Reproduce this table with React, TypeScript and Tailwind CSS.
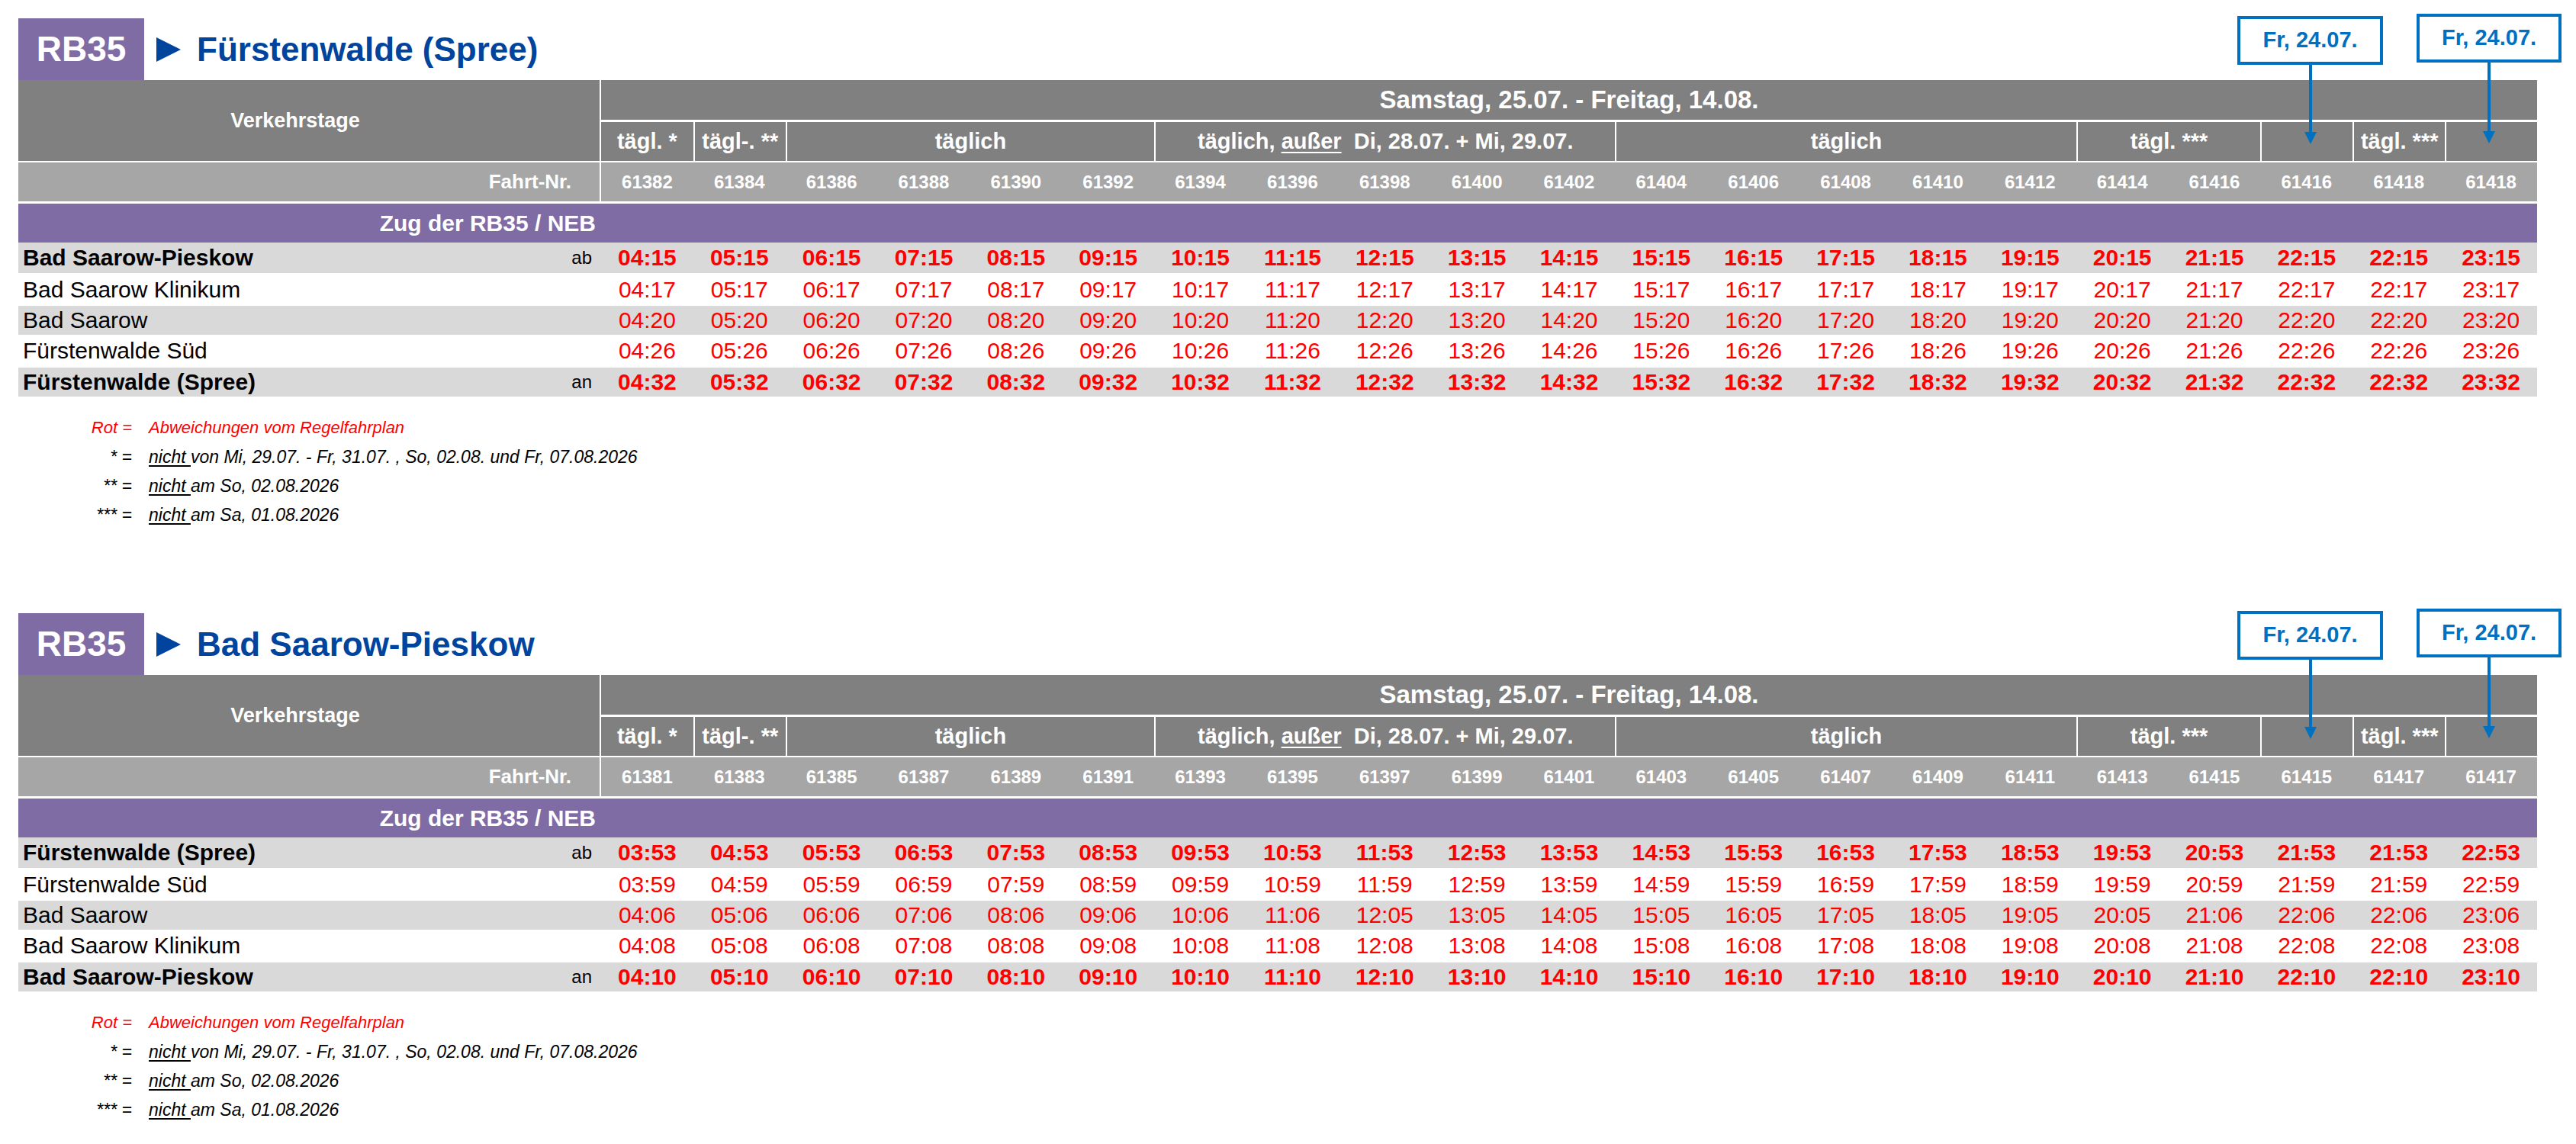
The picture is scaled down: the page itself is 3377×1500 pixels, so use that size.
import React from 'react';

// Two RB35 timetables (each direction), Excel-style: grey header bands,
// purple operator strip, zebra station rows, red times, blue callouts.

const GRID = 'grid w-[3302px] grid-cols-[764px_repeat(21,minmax(0,1fr))]';
const PURPLE = 'bg-[#806ca5]';

type Group = { span: 1 | 2 | 4 | 5; label: React.ReactNode };

const SPAN: Record<number, string> = {
  1: 'col-span-1',
  2: 'col-span-2',
  4: 'col-span-4',
  5: 'col-span-5',
};

const groups: Group[] = [
  { span: 1, label: 'tägl. *' },
  { span: 1, label: 'tägl-. **' },
  { span: 4, label: 'täglich' },
  {
    span: 5,
    label: (
      <>
        {'täglich,\u00a0'}
        <span className="underline decoration-2 underline-offset-[4px]">außer</span>
        {'\u00a0 Di, 28.07. + Mi, 29.07.'}
      </>
    ),
  },
  { span: 5, label: 'täglich' },
  { span: 2, label: 'tägl. ***' },
  { span: 1, label: '' },
  { span: 1, label: 'tägl. ***' },
  { span: 1, label: '' },
];

type Station = { name: string; bold?: boolean; tag?: string; times: string[] };

const pad = (n: number) => String(n).padStart(2, '0');

// base hours of the 21 trips
const hoursOut = [...Array.from({ length: 18 }, (_, i) => i + 4), 22, 22, 23];
const hoursBack = [...Array.from({ length: 18 }, (_, i) => i + 3), 21, 21, 22];

const tripsOut = [
  ...Array.from({ length: 17 }, (_, i) => String(61382 + i * 2)),
  '61416',
  '61416',
  '61418',
  '61418',
];
const tripsBack = [
  ...Array.from({ length: 17 }, (_, i) => String(61381 + i * 2)),
  '61415',
  '61415',
  '61417',
  '61417',
];

const at = (hours: number[], min: number, add = 0) => hours.map((h) => `${pad(h + add)}:${pad(min)}`);

const stationsOut: Station[] = [
  { name: 'Bad Saarow-Pieskow', bold: true, tag: 'ab', times: at(hoursOut, 15) },
  { name: 'Bad Saarow Klinikum', times: at(hoursOut, 17) },
  { name: 'Bad Saarow', times: at(hoursOut, 20) },
  { name: 'Fürstenwalde Süd', times: at(hoursOut, 26) },
  { name: 'Fürstenwalde (Spree)', bold: true, tag: 'an', times: at(hoursOut, 32) },
];

const stationsBack: Station[] = [
  { name: 'Fürstenwalde (Spree)', bold: true, tag: 'ab', times: at(hoursBack, 53) },
  { name: 'Fürstenwalde Süd', times: at(hoursBack, 59) },
  {
    name: 'Bad Saarow',
    times: hoursBack.map((h, i) => `${pad(h + 1)}:${i >= 8 && i <= 16 ? '05' : '06'}`),
  },
  { name: 'Bad Saarow Klinikum', times: at(hoursBack, 8, 1) },
  { name: 'Bad Saarow-Pieskow', bold: true, tag: 'an', times: at(hoursBack, 10, 1) },
];

function Arrowhead() {
  return (
    <svg width="16" height="16" viewBox="0 0 16 16" className="block">
      <polygon points="0,0 16,0 8,16" fill="#0070c0" />
    </svg>
  );
}

function Callouts() {
  return (
    <>
      <div className="absolute left-[2933px] top-[21px] flex flex-col items-center">
        <div className="flex h-[64px] w-[191px] items-center justify-center border-4 border-[#0070c0] bg-white text-[29px] font-bold text-[#0070c0]">
          Fr, 24.07.
        </div>
        <div className="h-[88px] w-[4px] bg-[#0070c0]" />
        <Arrowhead />
      </div>
      <div className="absolute left-[3168px] top-[18px] flex flex-col items-center">
        <div className="flex h-[64px] w-[190px] items-center justify-center border-4 border-[#0070c0] bg-white text-[29px] font-bold text-[#0070c0]">
          Fr, 24.07.
        </div>
        <div className="h-[90px] w-[4px] bg-[#0070c0]" />
        <Arrowhead />
      </div>
    </>
  );
}

function Notes() {
  const row = 'flex italic leading-[38px]';
  return (
    <div className="mt-[22px] flex flex-col">
      <div className={`${row} text-[22px] text-[#ff0000]`}>
        <span className="w-[149px] text-right">Rot =</span>
        <span className="ml-[22px]">Abweichungen vom Regelfahrplan</span>
      </div>
      <div className={`${row} text-[23px] text-black`}>
        <span className="w-[149px] text-right">* =</span>
        <span className="ml-[22px]">
          <span className="underline underline-offset-[3px]">nicht </span>von Mi, 29.07. - Fr, 31.07. , So,
          02.08. und Fr, 07.08.2026
        </span>
      </div>
      <div className={`${row} text-[23px] text-black`}>
        <span className="w-[149px] text-right">** =</span>
        <span className="ml-[22px]">
          <span className="underline underline-offset-[3px]">nicht </span>am So, 02.08.2026
        </span>
      </div>
      <div className={`${row} text-[23px] text-black`}>
        <span className="w-[149px] text-right">*** =</span>
        <span className="ml-[22px]">
          <span className="underline underline-offset-[3px]">nicht </span>am Sa, 01.08.2026
        </span>
      </div>
    </div>
  );
}

function Timetable({ title, trips, stations }: { title: string; trips: string[]; stations: Station[] }) {
  return (
    <section className="relative h-[780px] pl-[24px] pt-[24px]">
      <Callouts />

      {/* line badge + destination */}
      <div className="flex h-[81px] items-center">
        <div className={`flex h-full w-[165px] items-center justify-center ${PURPLE} text-[46px] font-bold text-white`}>
          RB35
        </div>
        <svg width="32" height="32" viewBox="0 0 32 32" className="ml-[16px]">
          <polygon points="0,0 32,16 0,32" fill="#00449e" />
        </svg>
        <h1 className="ml-[21px] text-[44px] font-bold leading-none text-[#00449e]">{title}</h1>
      </div>

      {/* Verkehrstage header */}
      <div className={`${GRID} grid-rows-[55px_51px] font-bold text-white`}>
        <div className="row-span-2 flex items-center justify-center border-r-2 border-white bg-[#808080] pr-[36px] text-[27px]">
          Verkehrstage
        </div>
        <div className="col-span-21 flex items-center justify-center border-b-[3px] border-white bg-[#808080] text-[33px]">
          Samstag, 25.07. - Freitag, 14.08.
        </div>
        {groups.map((g, i) => (
          <div
            key={i}
            className={`${SPAN[g.span]} flex items-center justify-center whitespace-nowrap bg-[#808080] text-[29px] ${
              i > 0 ? 'border-l-2 border-white' : ''
            }`}
          >
            {g.label}
          </div>
        ))}
      </div>

      {/* trip numbers */}
      <div className={`${GRID} mt-[2px] h-[51px] bg-[#a6a6a6] font-bold text-white`}>
        <div className="flex items-center justify-end border-r-2 border-white pr-[37px] text-[26px]">Fahrt-Nr.</div>
        {trips.map((t, i) => (
          <div key={i} className="flex items-center justify-center text-[24px]">
            {t}
          </div>
        ))}
      </div>

      {/* operator strip */}
      <div className={`mt-[3px] flex h-[51px] w-[3302px] ${PURPLE}`}>
        <div className="flex w-[764px] items-center justify-end pr-[7px] text-[30px] font-bold text-white">
          Zug der RB35 / NEB
        </div>
      </div>

      {/* station rows */}
      {stations.map((s, r) => (
        <div
          key={r}
          className={`${GRID} h-[40.4px] ${r % 2 === 0 ? 'bg-[#d9d9d9]' : 'bg-white'} ${
            r > 0 ? 'border-t-2 border-white' : ''
          }`}
        >
          <div className="flex items-center justify-between pl-[6px] pr-[12px] text-black">
            <span className={`text-[30px] leading-none ${s.bold ? 'font-bold' : ''}`}>{s.name}</span>
            {s.tag && <span className="text-[24px] leading-none">{s.tag}</span>}
          </div>
          {s.times.map((t, i) => (
            <div
              key={i}
              className={`flex items-center justify-center text-[30px] leading-none text-[#ff0000] ${
                s.bold ? 'font-bold' : ''
              }`}
            >
              {t}
            </div>
          ))}
        </div>
      ))}

      <Notes />
    </section>
  );
}

export default function App() {
  return (
    <div className="relative h-[1500px] w-[3377px] overflow-hidden bg-white font-['Liberation_Sans',Arial,sans-serif]">
      <Timetable title="Fürstenwalde (Spree)" trips={tripsOut} stations={stationsOut} />
      <Timetable title="Bad Saarow-Pieskow" trips={tripsBack} stations={stationsBack} />
    </div>
  );
}
